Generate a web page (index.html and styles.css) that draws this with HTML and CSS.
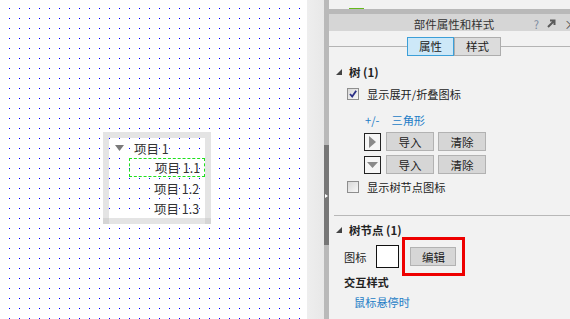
FILE: index.html
```html
<!DOCTYPE html>
<html lang="zh-CN">
<head>
    <meta charset="UTF-8">
    <title>部件属性和样式</title>
    <link rel="stylesheet" href="styles.css">
</head>
<body>

    <div class="canvas">
        <div class="tree-widget">
            <div class="tree-row">
                <svg class="tree-caret" width="9" height="6" viewBox="0 0 9 6"><polygon points="0,0 9,0 4.5,6" fill="#7a7a7a"/></svg>
                <span>项目 1</span>
            </div>
            <div class="tree-row child selected"><span>项目 1.1</span></div>
            <div class="tree-row child"><span>项目 1.2</span></div>
            <div class="tree-row child"><span>项目 1.3</span></div>
        </div>
    </div>

    <div class="splitter">
        <div class="splitter-pad"></div>
        <div class="splitter-bar">
            <div class="splitter-handle"><span class="splitter-arrow"></span></div>
        </div>
    </div>

    <div class="panel">
        <div class="panel-top"><span class="top-mark"></span></div>
        <div class="panel-band"></div>
        <div class="panel-title">
            <span></span>
            <span class="title-text">部件属性和样式</span>
            <span class="title-icons">
                <span class="ico-help">?</span>
                <svg width="9" height="9" viewBox="0 0 9 9"><path d="M1 8 L7 2 M3 1.5 H7.5 V6" stroke="#5a5a5a" stroke-width="2" fill="none"/></svg>
                <span class="ico-close">×</span>
            </span>
        </div>

        <div class="tabs-row">
            <div class="tabs">
                <span class="tab active">属性</span>
                <span class="tab">样式</span>
            </div>
        </div>

        <section class="prop-section">
            <h3 class="section-head">
                <svg width="6" height="6" viewBox="0 0 6 6"><polygon points="6,0 6,6 0,6" fill="#444"/></svg>
                树 (1)
            </h3>

            <label class="check-row">
                <span class="checkbox">
                    <svg width="10" height="10" viewBox="0 0 10 10"><path d="M2 5 L4.2 7.6 L8.2 1.8" stroke="#2b2f86" stroke-width="1.8" fill="none"/></svg>
                </span>
                显示展开/折叠图标
            </label>

            <div class="style-row">
                <span class="link">+/-</span>
                <span class="link">三角形</span>
            </div>

            <div class="icon-row">
                <span class="icon-box">
                    <svg width="7" height="12" viewBox="0 0 7 12"><polygon points="0,0 7,6 0,12" fill="#8a8a8a"/></svg>
                </span>
                <button class="btn">导入</button>
                <button class="btn">清除</button>
            </div>
            <div class="icon-row">
                <span class="icon-box">
                    <svg width="11" height="6" viewBox="0 0 11 6"><polygon points="0,0 11,0 5.5,6" fill="#8a8a8a"/></svg>
                </span>
                <button class="btn">导入</button>
                <button class="btn">清除</button>
            </div>

            <label class="check-row off">
                <span class="checkbox"></span>
                显示树节点图标
            </label>
        </section>

        <section class="prop-section second">
            <h3 class="section-head">
                <svg width="6" height="6" viewBox="0 0 6 6"><polygon points="6,0 6,6 0,6" fill="#444"/></svg>
                树节点 (1)
            </h3>

            <div class="node-icon-row">
                <span>图标</span>
                <span class="icon-preview"></span>
                <span class="highlight">
                    <button class="btn edit">编辑</button>
                </span>
            </div>

            <div class="sub-head">交互样式</div>
            <div class="link hover-link">鼠标悬停时</div>
        </section>
    </div>

</body>
</html>
```

FILE: styles.css
```css
* {
    margin: 0;
    padding: 0;
    box-sizing: border-box;
    font-family: "Noto Sans CJK SC", "Noto Sans", sans-serif;
}

body {
    width: 570px;
    height: 319px;
    overflow: hidden;
    display: flex;
    background: #fff;
    color: #222;
    font-size: 11.2px;
}

/* canvas */
.canvas {
    position: relative;
    width: 307px;
    flex-shrink: 0;
    height: 100%;
    background-color: #fff;
    background-image: conic-gradient(from 270deg at 1px 1px, #0000ff 90deg, transparent 0);
    background-size: 10px 10px;
    background-position: 9px 8px;
}

.tree-widget {
    position: absolute;
    left: 103px;
    top: 132px;
    width: 108px;
    height: 92px;
    border: 6px solid #e4e4e4;
}

.tree-widget::before,
.tree-widget::after {
    content: "";
    position: absolute;
    width: 6px;
    height: 6px;
    background: #d5d5d5;
}

.tree-widget::before {
    left: -6px;
    bottom: -6px;
}

.tree-widget::after {
    right: -6px;
    bottom: -6px;
}

.tree-row {
    height: 20px;
    display: flex;
    align-items: center;
    font-size: 12.5px;
    color: #333;
    padding-left: 6px;
}

.tree-caret {
    margin-right: 10px;
}

.tree-row.child {
    padding-left: 45px;
}

.tree-row.selected {
    margin-left: 20px;
    padding-left: 25px;
    width: 76px;
    height: 19px;
    border: 1px dashed #1de01d;
    margin-bottom: 1px;
}

/* splitter */
.splitter {
    display: flex;
    flex-shrink: 0;
    height: 100%;
}

.splitter-pad {
    width: 17px;
    background: linear-gradient(90deg, #eeeeee, #e8e8e8);
}

.splitter-bar {
    width: 5px;
    background: #b9b9b9;
    padding-top: 145px;
}

.splitter-handle {
    height: 100px;
    background: #777;
    padding-top: 49px;
}

.splitter-arrow {
    display: block;
    width: 0;
    height: 0;
    border-top: 2px solid transparent;
    border-bottom: 2px solid transparent;
    border-left: 3px solid #fff;
    margin-left: 1px;
}

/* panel */
.panel {
    width: 250px;
    flex-shrink: 0;
    height: 100%;
    background: #f2f2f2;
}

.panel-top {
    height: 9px;
    padding: 8px 0 0 20px;
}

.top-mark {
    display: block;
    width: 15px;
    height: 1px;
    background: #66b91d;
}

.panel-band {
    height: 5px;
    background: #b9b9b9;
}

.panel-title {
    height: 17px;
    background: #d6d6d6;
    display: grid;
    grid-template-columns: 1fr auto 1fr;
    align-items: center;
    color: #333;
    font-size: 11.5px;
}

.title-icons {
    justify-self: end;
    display: flex;
    align-items: center;
    gap: 8px;
    padding-right: 2px;
    color: #666;
}

.ico-help {
    color: #7a8aa0;
    font-size: 11px;
}

.ico-close {
    font-size: 13px;
    color: #555;
}

.tabs-row {
    height: 33px;
    padding-top: 6px;
    display: flex;
    justify-content: center;
    align-items: flex-start;
    background: linear-gradient(to bottom, transparent 15px, #b4b4b4 15px, #b4b4b4 16px, transparent 16px);
}

.tabs {
    display: flex;
}

.tab {
    width: 47px;
    height: 19px;
    line-height: 17px;
    text-align: center;
    background: #dcdcdc;
    border: 1px solid #adadad;
    color: #222;
    font-size: 11.5px;
}

.tab.active {
    background: #cde8f8;
    border-color: #3c9fd8;
}

.prop-section {
    padding-left: 7px;
}

.prop-section.second {
    margin: 20px 0 0 5px;
    padding-left: 2px;
    border-top: 1px solid #b8b8b8;
    padding-top: 6px;
}

.section-head {
    height: 16px;
    display: flex;
    align-items: center;
    gap: 7px;
    font-size: 11.5px;
    font-weight: bold;
    color: #222;
}

.check-row {
    display: flex;
    align-items: center;
    height: 16px;
    margin-top: 6px;
    padding-left: 11px;
    gap: 8px;
}

.check-row.off {
    margin-top: 5px;
}

.checkbox {
    width: 12px;
    height: 12px;
    border: 1px solid #8e8e8e;
    background: linear-gradient(135deg, #d8d8d8, #f8f8f8);
    display: flex;
    align-items: center;
    justify-content: center;
}

.link {
    color: #1b7cc6;
}

.style-row {
    height: 16px;
    margin-top: 10px;
    padding-left: 29px;
    display: flex;
    align-items: center;
    gap: 12px;
}

.icon-row {
    display: flex;
    align-items: center;
    gap: 4px;
    margin-top: 4px;
    padding-left: 28px;
}

.icon-box {
    width: 17px;
    height: 18px;
    border: 1px solid #222;
    background: #f6f6f6;
    display: flex;
    align-items: center;
    justify-content: center;
    margin-right: 1px;
}

.btn {
    width: 48px;
    height: 19px;
    background: #d6d6d6;
    border: 1px solid #b2b2b2;
    font-size: 11.5px;
    color: #222;
}

.node-icon-row {
    display: flex;
    align-items: center;
    margin-top: -1px;
    padding-left: 8px;
}

.icon-preview {
    width: 23px;
    height: 23px;
    background: #fff;
    border: 1px solid #111;
    margin-left: 10px;
}

.highlight {
    margin-left: 3px;
    border: 3px solid #ee0000;
    padding: 7px 6px 7px 5px;
    display: flex;
}

.btn.edit {
    width: 46px;
}

.sub-head {
    margin-top: -1px;
    padding-left: 8px;
    height: 14px;
    line-height: 14px;
    font-weight: 600;
}

.hover-link {
    margin-top: 6px;
    padding-left: 18px;
    line-height: 14px;
}
```
